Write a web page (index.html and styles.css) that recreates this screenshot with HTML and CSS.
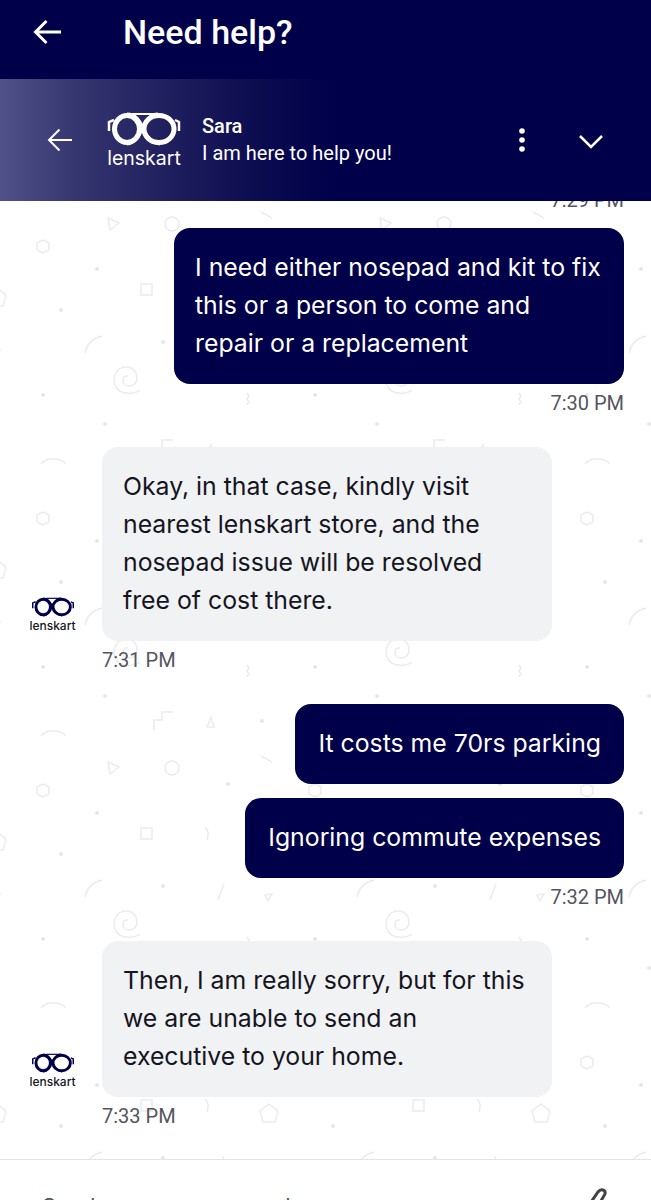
FILE: index.html
```html
<!DOCTYPE html>
<html lang="en">
<head>
    <meta charset="UTF-8">
    <meta name="viewport" content="width=device-width, initial-scale=1.0">
    <title>Need help?</title>
    <link rel="stylesheet" href="styles.css">
</head>
<body>
    <svg class="defs" width="0" height="0">
      <symbol id="glasses" viewBox="0 0 76 34">
        <ellipse cx="21" cy="17" rx="12.500" ry="13.500" fill="none" stroke="currentColor" stroke-width="5"/>
        <ellipse cx="53" cy="17" rx="15" ry="13.500" fill="none" stroke="currentColor" stroke-width="5"/>
        <path d="M21 2c9 0 13 7 16 14s8 15 17 16M52 2c-8 0-12 6-15 13-3 8-8 16-16 17" fill="none" stroke="currentColor" stroke-width="3"/>
        <path d="M26 2h26" fill="none" stroke="currentColor" stroke-width="2"/>
        <path d="M8 8 3 10v9M69 8l4 2v9" fill="none" stroke="currentColor" stroke-width="2.500"/>
      </symbol>
    </svg>

    <div class="app">
      <div class="top-bar">
        <svg class="back-icon" width="30" height="26" viewBox="0 0 30 26"><path d="M28 13H3M13.500 2 2.500 13l11 11" fill="none" stroke="#fff" stroke-width="3"/></svg>
        <div class="page-title">Need help?</div>
      </div>

      <div class="agent-bar">
        <svg class="agent-back" width="26" height="24" viewBox="0 0 26 24"><path d="M25 12H2M12.500 1.500 2 12l10.500 10.500" fill="none" stroke="#fff" stroke-width="2"/></svg>
        <div class="logo logo-white">
          <svg class="logo-glasses" width="76" height="34"><use href="#glasses"/></svg>
          <div class="logo-name">lenskart</div>
        </div>
        <div class="agent-info">
          <div class="agent-name">Sara</div>
          <div class="agent-status">I am here to help you!</div>
        </div>
        <div class="agent-actions">
          <svg width="8" height="24" viewBox="0 0 8 24"><circle cx="4" cy="3" r="2.800"/><circle cx="4" cy="12" r="2.800"/><circle cx="4" cy="21" r="2.800"/></svg>
          <svg class="chevron" width="26" height="16" viewBox="0 0 26 16"><path d="M2 2l11 11L24 2" fill="none" stroke="#fff" stroke-width="2.500"/></svg>
        </div>
      </div>

      <div class="chat">
        <div class="time time-clipped">7:29 PM</div>

        <div class="bubble bubble-user">I need either nosepad and kit to fix this or a person to come and repair or a replacement</div>
        <div class="time time-right">7:30 PM</div>

        <div class="bot-row">
          <div class="logo logo-dark">
            <svg class="logo-glasses" width="44" height="20"><use href="#glasses"/></svg>
            <div class="logo-name">lenskart</div>
          </div>
          <div class="bubble bubble-bot">Okay, in that case, kindly visit nearest lenskart store, and the nosepad issue will be resolved free of cost there.</div>
        </div>
        <div class="time time-left">7:31 PM</div>

        <div class="bubble bubble-user bubble-first">It costs me 70rs parking</div>
        <div class="bubble bubble-user bubble-next">Ignoring commute expenses</div>
        <div class="time time-right">7:32 PM</div>

        <div class="bot-row">
          <div class="logo logo-dark">
            <svg class="logo-glasses" width="44" height="20"><use href="#glasses"/></svg>
            <div class="logo-name">lenskart</div>
          </div>
          <div class="bubble bubble-bot">Then, I am really sorry, but for this we are unable to send an executive to your home.</div>
        </div>
        <div class="time time-left">7:33 PM</div>
      </div>

      <div class="composer">
        <div class="composer-text">Send us your message here</div>
        <svg class="clip-icon" width="28" height="44" viewBox="0 0 28 44"><path d="M3 30 19 7c3-4 8-2 7 2L12 33" fill="none" stroke="#444" stroke-width="3"/></svg>
      </div>
    </div>
</body>
</html>
```

FILE: styles.css
```css
* {
    box-sizing: border-box;
    margin: 0;
    padding: 0;
}

body {
    font-family: 'Inter', 'Roboto', sans-serif;
    background: #fff;
    color: #15151f;
}

.defs {
    display: block;
}

.app {
    width: 651px;
    height: 1200px;
    display: flex;
    flex-direction: column;
    overflow: hidden;
}

.top-bar {
    height: 79px;
    flex-shrink: 0;
    display: flex;
    align-items: center;
    padding: 0 0 16px 33px;
    background: #00004a;
    color: #fff;
}

.page-title {
    margin-left: 60px;
    font-family: 'Roboto', sans-serif;
    font-size: 34px;
    font-weight: 500;
}

.agent-bar {
    height: 122px;
    flex-shrink: 0;
    display: flex;
    align-items: center;
    padding-left: 47px;
    background: linear-gradient(90deg, #52528a 0%, #35356f 12%, #1c1c5c 28%, #0b0b50 40%, #00004a 52%);
    color: #fff;
}

.logo {
    display: flex;
    flex-direction: column;
    align-items: center;
}

.logo-name {
    font-family: 'Inter', sans-serif;
}

.logo-white {
    margin-left: 33px;
    width: 76px;
}

.logo-white .logo-name {
    margin-top: 1px;
    font-size: 19.500px;
    line-height: 22px;
}

.agent-info {
    margin-left: 20px;
    font-family: 'Roboto', sans-serif;
}

.agent-name {
    font-size: 20px;
    font-weight: 500;
    line-height: 26px;
}

.agent-status {
    font-size: 20px;
    line-height: 28px;
}

.agent-actions {
    margin-left: auto;
    padding-right: 47px;
    display: flex;
    align-items: center;
    gap: 52px;
    fill: #fff;
}

.chevron {
    margin-top: 3px;
}

.chat {
    flex: 1;
    min-height: 0;
    padding: 0 27px 0 28px;
    display: flex;
    flex-direction: column;
    overflow: hidden;
    background-color: #fff;
    background-image: url("data:image/svg+xml,%3Csvg xmlns='http://www.w3.org/2000/svg' width='272' height='272' fill='none' stroke='%23ececef' stroke-width='1.500'%3E%3Cpath d='M108 17l11 5-9 7zM269 87l9 7-3 11h-12l-3-11zM-3 87l9 7-3 11h-12l-3-11zM265 150l7-1-4 7zM-7 150l7-1-4 7zM43 39l6 3v7l-6 3-6-3v-7zM141 83h11v11h-11zM85 152c2-9 8-15 17-17M127 192c-8 0-13-6-13-13 0-8 6-13 12-13 7 0 11 5 11 11 0 5-4 8-8 8s-6-3-6-6 3-5 5-4M127 192c5 1 9 0 13-3M247 192l2 3-2 3 2 3-2 3M154 257v-10h8v-8h11M211 244l3 10h-7zM41 263c6-7 18-7 25 0M261 11l11 6M205 82c4 4 4 8 2 13M224 139l-6 16'/%3E%3Ccircle cx='172' cy='23' r='7'/%3E%3Cg fill='%23e6e6ea' stroke='none'%3E%3Ccircle cx='97' cy='68' r='2'/%3E%3Ccircle cx='61' cy='109' r='2'/%3E%3Ccircle cx='163' cy='141' r='2'/%3E%3Ccircle cx='43' cy='194' r='2'/%3E%3Ccircle cx='105' cy='223' r='2'/%3E%3Ccircle cx='262' cy='248' r='2'/%3E%3Ccircle cx='228' cy='39' r='2'/%3E%3C/g%3E%3C/svg%3E");
}

.time {
    flex-shrink: 0;
    font-family: 'Roboto', sans-serif;
    font-size: 20px;
    line-height: 22px;
    color: #55555f;
}

.time-clipped {
    align-self: flex-end;
    margin-top: -12px;
    margin-bottom: 17px;
}

.time-right {
    align-self: flex-end;
    margin-top: 8px;
}

.time-left {
    margin-left: 74px;
    margin-top: 8px;
}

.bubble {
    flex-shrink: 0;
    font-size: 24.800px;
    line-height: 38px;
    padding: 20px 20px 22px 21px;
    border-radius: 16px;
}

.bubble-user {
    align-self: flex-end;
    max-width: 450px;
    background: #00004a;
    color: #fff;
}

.bubble-first {
    margin-top: 33px;
    padding-left: 23px;
    padding-right: 23px;
}

.bubble-next {
    margin-top: 14px;
    padding-left: 23px;
    padding-right: 23px;
}

.bot-row {
    flex-shrink: 0;
    margin-top: 33px;
    display: flex;
    align-items: flex-end;
}

.bubble-bot {
    margin-left: 25px;
    width: 450px;
    background: #f1f2f4;
}

.logo-dark {
    width: 49px;
    margin-bottom: 9px;
    color: #00004a;
}

.logo-dark .logo-name {
    margin-top: 2px;
    font-size: 12px;
    font-weight: 500;
    line-height: 13px;
    color: #15151f;
}

.composer {
    height: 41px;
    flex-shrink: 0;
    display: flex;
    justify-content: space-between;
    padding: 32px 44px 0 42px;
    background: #fff;
    border-top: 1px solid #e4e4e4;
    overflow: hidden;
}

.composer-text {
    font-size: 22px;
    line-height: 28px;
    color: #55555f;
}

.clip-icon {
    flex-shrink: 0;
    margin-top: -7px;
}
```
